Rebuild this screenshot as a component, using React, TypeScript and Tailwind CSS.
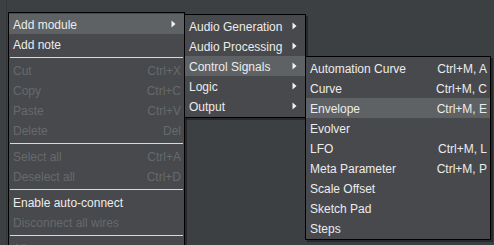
type Item =
  | { sep: true }
  | { label: string; shortcut?: string; disabled?: boolean; sub?: boolean; active?: boolean };

const mainItems: Item[] = [
  { label: "Add module", sub: true, active: true },
  { label: "Add note" },
  { sep: true },
  { label: "Cut", shortcut: "Ctrl+X", disabled: true },
  { label: "Copy", shortcut: "Ctrl+C", disabled: true },
  { label: "Paste", shortcut: "Ctrl+V", disabled: true },
  { label: "Delete", shortcut: "Del", disabled: true },
  { sep: true },
  { label: "Select all", shortcut: "Ctrl+A", disabled: true },
  { label: "Deselect all", shortcut: "Ctrl+D", disabled: true },
  { sep: true },
  { label: "Enable auto-connect" },
  { label: "Disconnect all wires", disabled: true },
  { sep: true },
  { label: "Align", disabled: true },
];

const categoryItems: Item[] = [
  { label: "Audio Generation", sub: true },
  { label: "Audio Processing", sub: true },
  { label: "Control Signals", sub: true, active: true },
  { label: "Logic", sub: true },
  { label: "Output", sub: true },
];

const controlItems: Item[] = [
  { label: "Automation Curve", shortcut: "Ctrl+M, A" },
  { label: "Curve", shortcut: "Ctrl+M, C" },
  { label: "Envelope", shortcut: "Ctrl+M, E", active: true },
  { label: "Evolver" },
  { label: "LFO", shortcut: "Ctrl+M, L" },
  { label: "Meta Parameter", shortcut: "Ctrl+M, P" },
  { label: "Scale Offset" },
  { label: "Sketch Pad" },
  { label: "Steps" },
];

function Arrow() {
  return (
    <svg width="5" height="8" viewBox="0 0 5 8" className="shrink-0">
      <path d="M0.5 0.5 L4.5 4 L0.5 7.5 Z" fill="#f2f2f2" />
    </svg>
  );
}

function Menu({ items, className }: { items: Item[]; className: string }) {
  return (
    <div
      className={`absolute flex flex-col border border-black bg-[#47494c] py-px shadow-[2px_2px_0_rgba(0,0,0,0.35)] ${className}`}
    >
      {items.map((it, i) =>
        "sep" in it ? (
          <div key={i} className="flex h-[6px] items-center px-[1px]">
            <div className="h-px w-full bg-[#d9d9d9]" />
          </div>
        ) : (
          <div
            key={i}
            className={`flex h-[20px] shrink-0 items-center justify-between pl-[4px] pr-[3px] pt-[2px] ${
              it.active ? "bg-[#5e6264]" : ""
            } ${it.disabled ? "text-[#66696c]" : "text-[#ececec]"}`}
          >
            <span className="whitespace-nowrap">{it.label}</span>
            {it.shortcut && <span className="whitespace-nowrap">{it.shortcut}</span>}
            {it.sub && (
              <span className="-mt-[2px] pr-[5px]">
                <Arrow />
              </span>
            )}
          </div>
        )
      )}
    </div>
  );
}

export default function App() {
  return (
    <div
      className="relative h-[245px] w-[494px] overflow-hidden bg-[#3d4043] text-[12px] leading-none"
      style={{ fontFamily: '"Liberation Sans", Arial, sans-serif' }}
    >
      <div className="absolute bottom-0 left-[6px] top-0 w-px bg-[#35383a]" />
      <Menu items={mainItems} className="left-[8px] top-[12px] w-[177px]" />
      <Menu items={categoryItems} className="left-[184px] top-[14px] w-[122px]" />
      <Menu items={controlItems} className="left-[305px] top-[56px] w-[186px]" />
    </div>
  );
}
